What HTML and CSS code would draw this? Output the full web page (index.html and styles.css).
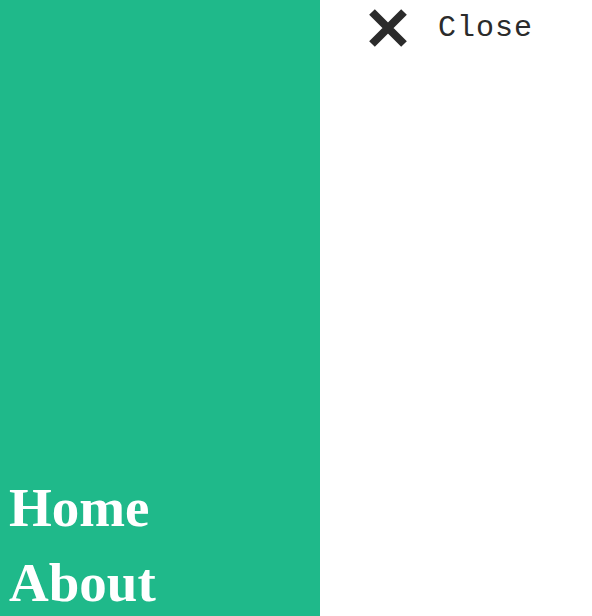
FILE: index.html
```html
<!DOCTYPE html>
<html lang="en">
<head>
<meta charset="utf-8">
<title>Menu</title>
<link rel="stylesheet" href="styles.css">
</head>
<body>
<div class="layout">
  <nav class="panel">
    <ul class="menu">
      <li><a href="#">Home</a></li>
      <li><a href="#">About</a></li>
    </ul>
  </nav>
  <div class="side">
    <button class="close" type="button">
      <svg class="close-icon" width="40" height="40" viewBox="0 0 40 40" aria-hidden="true">
        <path d="M4 4 L36 36 M36 4 L4 36" stroke="#2b2b2b" stroke-width="8" fill="none"/>
      </svg>
      <span class="close-label">Close</span>
    </button>
  </div>
</div>
</body>
</html>
```

FILE: styles.css
```css
html, body {
  margin: 0;
  padding: 0;
  height: 100%;
  background: #ffffff;
}
.layout {
  display: flex;
  height: 616px;
}
.panel {
  width: 320px;
  flex: none;
  background: #1fb98a;
  display: flex;
  flex-direction: column;
  justify-content: flex-end;
}
.menu {
  list-style: none;
  margin: 0;
  padding: 0 0 0 9px;
}
.menu li {
  line-height: 83px;
  height: 75px;
}
.menu a {
  font-family: "Liberation Serif", serif;
  font-weight: bold;
  font-size: 55px;
  color: #ffffff;
  text-decoration: none;
}
.side {
  flex: 1;
  padding: 8px 0 0 48px;
}
.close {
  display: flex;
  align-items: center;
  gap: 30px;
  background: none;
  border: 0;
  padding: 0;
  cursor: pointer;
}
.close-icon {
  display: block;
}
.close-label {
  font-family: "Liberation Mono", monospace;
  font-size: 30px;
  letter-spacing: 1px;
  color: #2b2b2b;
}
```
